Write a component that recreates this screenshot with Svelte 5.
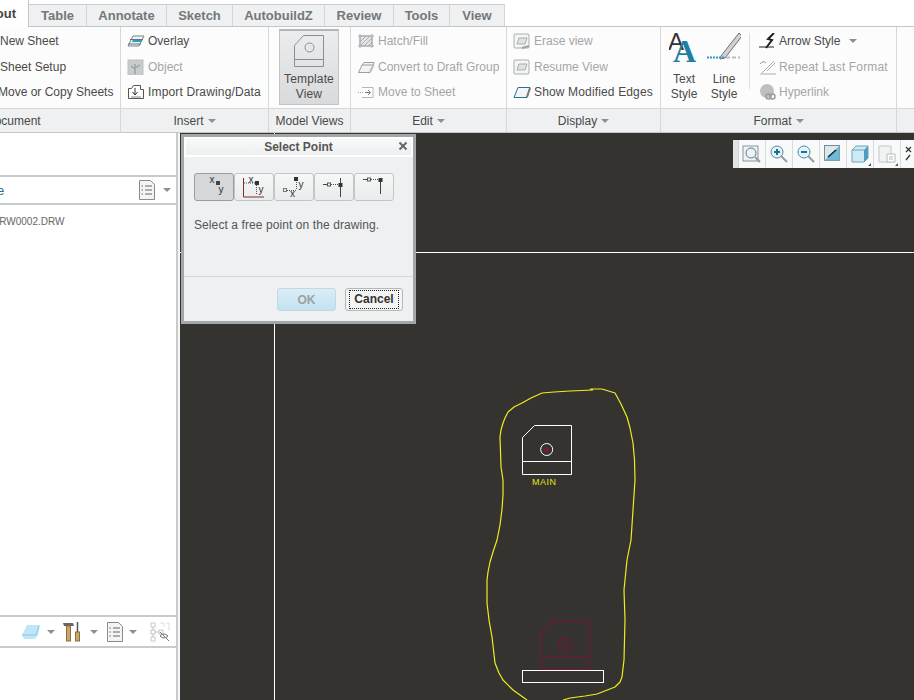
<script>
  const tabs = [
    { label: 'Table', w: 58 }, { label: 'Annotate', w: 80 }, { label: 'Sketch', w: 66 },
    { label: 'AutobuildZ', w: 92 }, { label: 'Review', w: 69 }, { label: 'Tools', w: 56 }, { label: 'View', w: 55 }
  ];
</script>

<div class="shell">
  <div class="tabs">
    <div class="tab active">Layout</div>
    {#each tabs as t}
      <div class="tab" style="width:{t.w}px">{t.label}</div>
    {/each}
  </div>

  <div class="ribbon">
    <section class="group" style="width:121px">
      <div class="body col first">
        <div class="item">New Sheet</div>
        <div class="item">Sheet Setup</div>
        <div class="item">Move or Copy Sheets</div>
      </div>
      <div class="foot clipfoot"><span>Document</span></div>
    </section>

    <section class="group" style="width:148px">
      <div class="body col">
        <div class="item">
          <svg class="ic" viewBox="0 0 18 16"><path d="M1 13 6 3h11l-5 10z" fill="#eef3f6" stroke="#77838b"/><path d="M6 6.500h10l-2 2.500H5z" fill="#2f9bc5"/><path d="M1 11h13M3 6.500h13" stroke="#68747c" fill="none"/></svg>
          <span>Overlay</span>
        </div>
        <div class="item off">
          <svg class="ic" viewBox="0 0 18 16"><rect x="1" y="1" width="15" height="15" fill="#c9cccd" stroke="#bcc0c2"/><path d="M8 15V5M8 10 4 7M8 9l5-3" stroke="#9a9fa1" stroke-width="1.400" fill="none"/></svg>
          <span>Object</span>
        </div>
        <div class="item wide-text">
          <svg class="ic" viewBox="0 0 18 16"><path d="M1.500 4.500h3l2-3h7v4h3v9h-15z" fill="#fff" stroke="#555"/><path d="M8 4v6M5.500 8 8 11l2.500-3" stroke="#333" fill="none"/><path d="M4 13h10" stroke="#888"/></svg>
          <span>Import Drawing/Data</span>
        </div>
      </div>
      <div class="foot">Insert <i class="caret"></i></div>
    </section>

    <section class="group" style="width:82px">
      <div class="body big-wrap">
        <div class="bigbtn">
          <svg width="30" height="32" viewBox="0 0 30 32"><path d="M.5 31.500V10.500L9.500.5h20v31zM.5 24.500h29" fill="none" stroke="#8b8f91"/><circle cx="15.500" cy="12.500" r="4.500" fill="none" stroke="#8b8f91"/></svg>
          <span>Template<br />View</span>
        </div>
      </div>
      <div class="foot">Model Views</div>
    </section>

    <section class="group" style="width:156px">
      <div class="body col">
        <div class="item off">
          <svg class="ic" viewBox="0 0 18 16"><rect x="3" y="3" width="12" height="10" fill="#e4e5e6" stroke="#a8acae"/><path d="M1 3h16M1 13h16M3 1v14M15 1v14M3 9l6-6M3 13 13 3M7 13l8-8M11 13l4-4" stroke="#a9adaf" fill="none"/></svg>
          <span>Hatch/Fill</span>
        </div>
        <div class="item off">
          <svg class="ic" viewBox="0 0 18 16"><path d="M1.500 13.500 5 6h11.500L13 13.500zM5 6l2-2.500h10L16.500 6" fill="#f2f3f4" stroke="#9a9ea0"/><path d="M13 13l3.500-7" stroke="#bdbfc0" stroke-width="2"/></svg>
          <span>Convert to Draft Group</span>
        </div>
        <div class="item off">
          <svg class="ic" viewBox="0 0 18 16"><path d="M5 3.500h11v10H5" fill="#fff" stroke="#b5b8ba"/><path d="M1 8.500h6" stroke="#9a9ea0" stroke-dasharray="1 1"/><path d="M8 8.500h5M11 6l2.500 2.500L11 11" stroke="#777" fill="none"/></svg>
          <span>Move to Sheet</span>
        </div>
      </div>
      <div class="foot">Edit <i class="caret"></i></div>
    </section>

    <section class="group" style="width:154px">
      <div class="body col">
        <div class="item off">
          <svg class="ic" viewBox="0 0 18 16"><rect x="1" y="1" width="15" height="14" rx="1" fill="#f4f5f5" stroke="#a9adaf"/><path d="M4 11 6 5h8l-2 6z" fill="#dfe1e2" stroke="#a9adaf"/><path d="M9 15l7-2" stroke="#9fa3a5" stroke-width="2"/></svg>
          <span>Erase view</span>
        </div>
        <div class="item off">
          <svg class="ic" viewBox="0 0 18 16"><rect x="1" y="1" width="15" height="14" rx="1" fill="#f4f5f5" stroke="#a9adaf"/><path d="M4 11 6 5h8l-2 6z" fill="#dfe1e2" stroke="#a9adaf"/></svg>
          <span>Resume View</span>
        </div>
        <div class="item wide-text">
          <svg class="ic" viewBox="0 0 18 16"><path d="M1 13.500 5 3.500h12L14 13.500z" fill="#f2f4f5" stroke="#2a6f92"/><path d="M14 13l3-9" stroke="#777" stroke-width="2"/></svg>
          <span>Show Modified Edges</span>
        </div>
      </div>
      <div class="foot">Display <i class="caret"></i></div>
    </section>

    <section class="group" style="width:236px">
      <div class="body format">
        <div class="stylebtn">
          <svg width="30" height="34" viewBox="0 0 30 34"><text x="-1" y="19" class="ga">A</text><text x="4" y="31" class="gb">A</text></svg>
          <span>Text<br />Style</span>
        </div>
        <div class="stylebtn line">
          <svg width="34" height="34" viewBox="0 0 34 34"><path d="M14 25 32 2l3 3-17 22-5 1z" fill="#cfd1d2" stroke="#6f6f6f"/><path d="M0 26.500h18" stroke="#2f9bc5" stroke-width="2" stroke-dasharray="2 1"/><path d="M19 26.500h14" stroke="#bbb" stroke-width="2" stroke-dasharray="4 2"/></svg>
          <span>Line<br />Style</span>
        </div>
        <div class="vsep"></div>
        <div class="col fmtcol">
          <div class="item">
            <svg class="ic" viewBox="0 0 18 16"><path d="M0 14h15" stroke="#222"/><path d="M15 0 9 6l4 1-6 8" stroke="#222" stroke-width="2" fill="none"/></svg>
            <span>Arrow Style</span><i class="caret wide"></i>
          </div>
          <div class="item off wide-text">
            <svg class="ic" viewBox="0 0 18 16"><path d="M3 14 15 2M8 12 16 4M1 15h16" stroke="#a9adaf" fill="none"/><path d="M1 5q3-4 6-1" stroke="#8f9496" fill="none"/></svg>
            <span>Repeat Last Format</span>
          </div>
          <div class="item off">
            <svg class="ic" viewBox="0 0 18 16"><circle cx="8" cy="7" r="7" fill="#bdc0c1"/><rect x="7" y="10" width="5" height="5" rx="2.500" fill="none" stroke="#9a9ea0" stroke-width="1.500"/><rect x="11" y="10" width="5" height="5" rx="2.500" fill="none" stroke="#9a9ea0" stroke-width="1.500"/></svg>
            <span>Hyperlink</span>
          </div>
        </div>
      </div>
      <div class="foot">Format <i class="caret"></i></div>
    </section>

    <section class="group last">
      <div class="body"></div>
      <div class="foot"></div>
    </section>
  </div>

  <div class="main">
    <aside class="side">
      <div class="side-top"></div>
      <div class="side-head">
        <span class="tree">e</span>
        <svg class="doc" width="16" height="20" viewBox="0 0 16 20"><path d="M.5.5h11l4 4v15H.5z" fill="#f4f4f4" stroke="#8a8a8a"/><path d="M6 6h7M6 10h7M6 14h7" stroke="#666"/><path d="M2.500 6h1.500M2.500 10h1.500M2.500 14h1.500" stroke="#666"/></svg>
        <i class="caret"></i>
      </div>
      <div class="side-list"><span>DRW0002.DRW</span></div>
      <div class="side-tools">
        <svg width="20" height="16" viewBox="0 0 20 16"><path d="M1 11 6 1h13l-2 10-3 4H3z" fill="#bfe6f4"/><path d="M1 11h14l3-9" stroke="#8cc9df" fill="none"/></svg>
        <i class="caret"></i>
        <svg class="tl hammer" width="18" height="21" viewBox="0 0 18 21"><path d="M0 2h10l1 3H1z" fill="#666"/><rect x="3.500" y="5" width="4" height="15" fill="#c9a66b" stroke="#8a6f3c"/><rect x="12.500" y="11" width="4" height="9" fill="#c9a66b" stroke="#8a6f3c"/><path d="M14.500 1v10" stroke="#555" stroke-width="1.500"/></svg>
        <i class="caret"></i>
        <svg class="tl" width="16" height="20" viewBox="0 0 16 20"><path d="M.5.5h11l4 4v15H.5z" fill="#f4f4f4" stroke="#8a8a8a"/><path d="M6 6h7M6 10h7M6 14h7M2.500 6h1.500M2.500 10h1.500M2.500 14h1.500" stroke="#666"/></svg>
        <i class="caret"></i>
        <svg class="tl" width="20" height="20" viewBox="0 0 20 20"><path d="M1 1h4v4H1zM1 8h4v4H1zM1 15h4v4H1zM9 8h4v4H9zM5 10h4M3 5v3M3 12v3" stroke="#c3c5c6" fill="none"/><path d="M10 1h4v4M16 1h3v8" stroke="#dcdddd" fill="none"/><path d="M10 14q4-4 8 0-4 4-8 0zM10 10l9 9" stroke="#777" fill="none"/></svg>
      </div>
      <div class="side-bottom"></div>
    </aside>

    <div class="gutter"></div>

    <div class="canvas">
      <svg class="drawing" width="734" height="567" viewBox="180 133 734 567">
        <path d="M274.500 133v567M180 252.500h734" stroke="#fff" fill="none"/>
        <path d="M593 390 570 391 554 392 542 393 531 398 522 403 514 407 508 412 505 418 503 423 501 430 500 437 500.500 452 501 467 503 480 503 495 502 509 500 525 497 540 493 552 490 562 488 572 487 580 487 603 489 620 492 637 495 663 499 673 503 680 513 690 527 700M563 700 570 698 585 696 597 694 615 687 620 682 622 677 624 660 625 620 624 590 626 570 627 560 631 540 633 510 635 480 634.500 460 633 443 630 428 627 417 621 404 615 393 602 389 590 389" fill="none" stroke="#eeee1e" stroke-width="1.200" stroke-linejoin="round"/>
        <path d="M522.500 474.500V437.500L534.500 425.500H571.500V474.500ZM522.500 461.500H571.500" fill="none" stroke="#fff"/>
        <circle cx="546.700" cy="449.500" r="6" fill="none" stroke="#fff"/>
        <circle cx="546.700" cy="449.500" r="2.500" fill="#7a1b3a"/>
        <text x="532" y="485" class="main-label">MAIN</text>
        <path d="M540.500 669.500V632.500L552.500 620.500H589.500V669.500ZM540.500 656.500H589.500" fill="none" stroke="#6d1a34" stroke-width="1.300"/>
        <circle cx="565" cy="645" r="6.500" fill="none" stroke="#6d1a34" stroke-width="1.300"/>
        <circle cx="565" cy="645" r="2" fill="#6d1a34"/>
        <rect x="522.500" y="670.500" width="81" height="12" fill="#34332f" stroke="#fff"/>
      </svg>

      <div class="viewbar">
        <div class="handle"></div>
        <div class="vb"><svg width="20" height="20" viewBox="0 0 20 20"><rect x="1" y="2" width="15" height="15" fill="#f0f2f3" stroke="#8d9499"/><circle cx="9" cy="9" r="5" fill="#e9f4f8" stroke="#5b7f92"/><path d="M13 13l5 5" stroke="#9a9a9a" stroke-width="2"/></svg></div>
        <div class="vb"><svg width="20" height="20" viewBox="0 0 20 20"><circle cx="8" cy="8" r="6" fill="#e3f2f8" stroke="#4f8aa6"/><path d="M5 8h6M8 5v6" stroke="#1c6f97" stroke-width="2"/><path d="M12 12l6 6" stroke="#9a9a9a" stroke-width="2"/></svg></div>
        <div class="vb"><svg width="20" height="20" viewBox="0 0 20 20"><circle cx="8" cy="8" r="6" fill="#e3f2f8" stroke="#4f8aa6"/><path d="M5 8h6" stroke="#1c6f97" stroke-width="2"/><path d="M12 12l6 6" stroke="#9a9a9a" stroke-width="2"/></svg></div>
        <div class="vb"><svg width="18" height="18" viewBox="0 0 18 18"><rect x=".5" y=".5" width="15" height="15" fill="#d9e9ef" stroke="#7f8a90"/><path d="M.5 15.500 15.500.5v15z" fill="#6fb9d6"/><path d="M4 12 12 5" stroke="#222" stroke-width="1.500"/></svg></div>
        <div class="vb corner"><svg width="18" height="18" viewBox="0 0 18 18"><path d="M1 5 5 1h12v12l-4 4H1z" fill="#cfeaf5" stroke="#6da6bf"/><path d="M13 5v12l4-4V1z" fill="#4f9cc0"/><path d="M1 5h12" stroke="#6da6bf"/></svg></div>
        <div class="vb corner"><svg width="18" height="18" viewBox="0 0 18 18"><path d="M1 1h12v16H1z" fill="#f1f2f2" stroke="#c4c7c8"/><path d="M9 9h8v8H9z" fill="#fff" stroke="#b6b9bb"/><path d="M11 12h4M11 14h4" stroke="#b6b9bb"/></svg></div>
        <div class="vb xy"><svg width="12" height="20" viewBox="0 0 12 20"><path d="M3 3l5 5M8 3l-5 5M3 16l4-5" stroke="#333" stroke-width="1.300" fill="none"/></svg></div>
      </div>

      <div class="dialog">
        <div class="dlg-title"><span>Select Point</span>
          <svg class="close" width="10" height="10" viewBox="0 0 10 10"><path d="M1.500 1.500l7 7M8.500 1.500l-7 7" stroke="#666" stroke-width="2"/></svg>
        </div>
        <div class="dlg-body">
          <div class="seg">
            <button class="sel"><svg width="26" height="22" viewBox="0 0 26 22"><text x="8.500" y="6.500" class="t">x</text><rect x="15" y="5" width="4" height="4" fill="#444"/><text x="17.500" y="16.500" class="t">y</text></svg></button>
            <button><svg width="26" height="22" viewBox="0 0 26 22"><path d="M2.500 2v19H23" fill="none" stroke="#7a2f2f"/><path d="M3 7h11M15.500 9v10" stroke="#555" stroke-dasharray="1 1" fill="none"/><text x="7.500" y="7" class="t">x</text><rect x="14" y="5" width="4" height="4" fill="#333"/><text x="17.500" y="16.500" class="t">y</text></svg></button>
            <button><svg width="26" height="22" viewBox="0 0 26 22"><rect x="2.500" y="12.500" width="3" height="3" fill="none" stroke="#777"/><path d="M6 14.500h9M15.500 6v8" stroke="#555" stroke-dasharray="1 1" fill="none"/><rect x="13" y="1" width="4" height="4" fill="#333"/><text x="17.500" y="12" class="t">y</text><text x="9" y="21" class="t">x</text></svg></button>
            <button><svg width="26" height="22" viewBox="0 0 26 22"><path d="M2 8.500h4" stroke="#444" fill="none"/><path d="M10 8.500h8" stroke="#555" stroke-dasharray="1 1" fill="none"/><rect x="6.500" y="7" width="3" height="3" fill="none" stroke="#555"/><path d="M19.500 2v19" stroke="#444"/><rect x="17.500" y="7" width="4" height="4" fill="#333"/></svg></button>
            <button><svg width="26" height="22" viewBox="0 0 26 22"><path d="M2 3.500h4" stroke="#444" fill="none"/><path d="M10 3.500h8" stroke="#555" stroke-dasharray="1 1" fill="none"/><rect x="6.500" y="2" width="3" height="3" fill="none" stroke="#555"/><path d="M19.500 3v15" stroke="#444"/><rect x="17.500" y="2" width="4" height="4" fill="#333"/></svg></button>
          </div>
          <p class="msg">Select a free point on the drawing.</p>
        </div>
        <div class="dlg-foot">
          <div class="btn ok">OK</div>
          <div class="btn cancel"><span>Cancel</span></div>
        </div>
      </div>
    </div>
  </div>
</div>

<style>
  :global(body) { margin: 0; background: #fff; }
  .shell {
    width: 914px; height: 700px; overflow: hidden; display: flex; flex-direction: column;
    font-family: "Liberation Sans", Arial, sans-serif; font-size: 12px; color: #4a4a4a;
  }
  .tabs { height: 27px; flex: none; display: flex; align-items: flex-end; box-sizing: border-box; border-bottom: 1px solid #c4c6c7; background: #fff; }
  .tab {
    box-sizing: border-box; height: 22px; display: flex; align-items: center; justify-content: center;
    font-size: 13px; font-weight: bold; color: #74777a; background: #eef0f1;
    border-top: 1px solid #c9cbcc; border-right: 1px solid #d3d5d6; flex: none;
  }
  .tab.active {
    width: 29px; height: 27px; margin-bottom: -1px; background: #fff; color: #444; justify-content: flex-end;
    border-top: 0; border-right: 1px solid #c4c6c7; padding-right: 12px; overflow: hidden; white-space: nowrap;
  }
  .ribbon { height: 106px; flex: none; display: flex; background: #fcfcfc; border-bottom: 1px solid #c4c6c7; box-sizing: border-box; }
  .group { display: flex; flex-direction: column; flex: none; box-sizing: border-box; border-right: 1px solid #d5d7d8; }
  .group.last { flex: 1; border-right: 0; }
  .body { height: 81px; box-sizing: border-box; }
  .foot {
    height: 24px; box-sizing: border-box; border-top: 1px solid #d5d7d8; background: #eef0f1; display: flex; align-items: center; justify-content: center; gap: 4px; color: #484848; white-space: nowrap;
  }
  .clipfoot { justify-content: flex-start; overflow: hidden; }
  .clipfoot span { margin-left: -14px; }
  .col { display: flex; flex-direction: column; padding-top: 1px; }
  .item { height: 25px; flex: none; display: flex; align-items: center; white-space: nowrap; padding-left: 6px; gap: 3px; }
  .item:first-child { height: 26px; }
  .first .item { padding-left: 0; }
  .first .item:nth-child(3) { margin-left: -2px; }
  .wide-text { letter-spacing: .15px; }
  .item.off { color: #a3a6a8; }
  .ic { width: 18px; height: 16px; flex: none; }
  .caret { width: 0; height: 0; border-left: 4px solid transparent; border-right: 4px solid transparent; border-top: 4px solid #8d8f91; display: block; flex: none; }
  .caret.wide { margin-left: 7px; }
  .big-wrap { padding: 2px 0 0 10px; }
  .bigbtn {
    width: 60px; height: 76px; box-sizing: border-box; background: linear-gradient(#ebeced, #d8dadb); border: 1px solid #c2c4c5; border-top: 2px solid #b4b6b7;
    display: flex; flex-direction: column; align-items: center; text-align: center; padding-top: 4px; line-height: 15px; letter-spacing: .15px;
  }
  .bigbtn span { margin-top: 5px; }
  .format { display: flex; padding-top: 4px; }
  .stylebtn { width: 42px; margin-left: 2px; display: flex; flex-direction: column; align-items: center; text-align: center; line-height: 15px; }
  .stylebtn.line { margin-left: -2px; width: 42px; }
  .stylebtn span { margin-top: 7px; }
  .ga { font: 24px "Liberation Sans", sans-serif; fill: #333; }
  .gb { font: bold 32px "Liberation Serif", serif; fill: #1d7fa6; }
  .vsep { width: 1px; height: 56px; margin: 2px 0 0 4px; background: #dcdedf; flex: none; }
  .fmtcol { padding-top: 0; margin-top: -3px; padding-left: 3px; }
  .fmtcol .item { gap: 2px; }
  .main { flex: 1; min-height: 0; display: flex; }
  .side { width: 176px; flex: none; background: #fff; display: flex; flex-direction: column; }
  .side-top { height: 42px; flex: none; border-bottom: 2px solid #c8cacb; background: #fff; }
  .side-head { height: 28px; flex: none; box-sizing: border-box; border-bottom: 2px solid #c8cacb; display: flex; align-items: center; padding: 0 5px 0 0; }
  .tree { color: #2a6f92; font-size: 13px; margin-left: -3px; }
  .doc { margin-left: auto; margin-right: 8px; }
  .side-list { height: 410px; flex: none; box-sizing: border-box; padding-top: 10px; overflow: hidden; }
  .side-list span { display: block; margin-left: -8px; white-space: nowrap; color: #666; font-size: 10px; line-height: 13px; }
  .side-tools { height: 33px; flex: none; box-sizing: border-box; border-top: 2px solid #c8cacb; border-bottom: 2px solid #c8cacb; display: flex; align-items: center; padding-left: 21px; }
  .side-tools .caret { margin-left: 6px; }
  .tl { margin-left: 9px; flex: none; }
  .hammer { margin-left: 8px; }
  .side-tools .hammer + .caret { margin-left: 9px; }
  .side-tools .tl:last-child { margin-left: 13px; }
  .side-bottom { flex: 1; }
  .gutter { width: 4px; flex: none; background: #f6f6f6; border-left: 2px solid #c8cacb; box-sizing: border-box; }
  .canvas { flex: 1; position: relative; background: #34332f; overflow: hidden; }
  .drawing { position: absolute; left: 0; top: 0; }
  .main-label { font: 9px "Liberation Sans", sans-serif; fill: #e6e619; letter-spacing: .5px; }
  .viewbar { position: absolute; left: 553px; top: 7px; height: 28px; width: 181px; background: #f8f9f9; display: flex; align-items: stretch; }
  .handle { width: 5px; flex: none; background: #e1e3e4; border-right: 1px solid #d0d2d3; }
  .vb { width: 27px; flex: none; box-sizing: border-box; border-right: 1px solid #d8dadb; display: flex; align-items: center; justify-content: center; position: relative; }
  .corner::after { content: ""; position: absolute; right: 2px; bottom: 2px; border-left: 3px solid transparent; border-bottom: 3px solid #555; }
  .xy { border: 0; justify-content: flex-start; padding-left: 2px; }
  .dialog {
    position: absolute; left: 1px; top: 1px; width: 235px; height: 190px; box-sizing: border-box;
    border: 3px solid #a4a7a9; background: #eef0f1; display: flex; flex-direction: column;
  }
  .dlg-title {
    height: 20px; flex: none; box-sizing: border-box; background: linear-gradient(#fafafa, #eceeef); border-bottom: 1px solid #d5d7d8;
    position: relative; display: flex; align-items: center; justify-content: center; font-weight: bold; color: #555; outline: 2px solid #fff; outline-offset: -2px;
  }
  .close { position: absolute; right: 5px; top: 4px; }
  .dlg-body { flex: 1; padding: 16px 0 0 10px; border-bottom: 1px solid #d5d7d8; }
  .seg { display: flex; }
  .seg button {
    width: 40px; height: 28px; padding: 0; box-sizing: border-box; border: 1px solid #c2c4c5; border-radius: 3px; background: linear-gradient(#f6f7f7, #e9ebec);
    display: flex; align-items: center; justify-content: center;
  }
  .seg button.sel { background: #d5d7d8; border-color: #9a9c9e; }
  .t { font: 10px "Liberation Sans", sans-serif; fill: #333; }
  .msg { margin: 17px 0 0; color: #555; letter-spacing: .09px; }
  .dlg-foot { height: 44px; flex: none; display: flex; justify-content: flex-end; gap: 9px; padding: 11px 10px 0 0; box-sizing: border-box; }
  .btn { height: 23px; box-sizing: border-box; border-radius: 3px; display: flex; align-items: center; justify-content: center; font-weight: bold; }
  .ok { width: 59px; background: linear-gradient(#d9edf7, #c4e2f1); border: 1px solid #c4d6df; color: #9ba1a4; }
  .cancel { width: 58px; background: #f3f4f4; border: 1px solid #b4b6b8; color: #333; }
  .cancel span { border: 1px dotted #222; padding: 2px 3px; line-height: 13px; width: 50px; box-sizing: border-box; text-align: center; }
</style>
